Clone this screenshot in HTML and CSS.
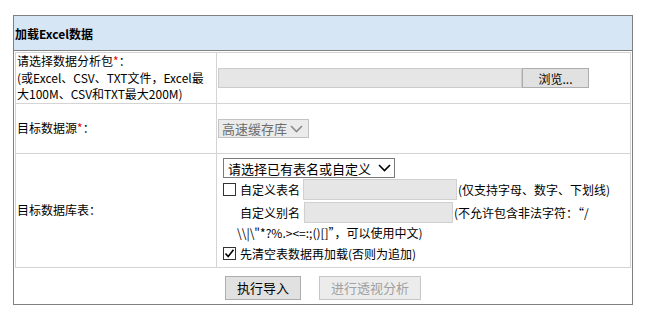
FILE: index.html
```html
<!DOCTYPE html>
<html lang="zh-CN">
  <head>
    <meta charset="UTF-8" />
    <meta name="viewport" content="width=device-width, initial-scale=1.0" />
    <title>加载Excel数据</title>
    <link rel="stylesheet" href="styles.css">
  </head>
  <body>
    <div class="panel">
      <div class="panel-head">加载Excel数据</div>
      <table class="form-table">
        <tr class="row-file">
          <td class="label">请选择数据分析包<span class="req">*</span>：<br>(或Excel、CSV、TXT文件，Excel最<br>大100M、CSV和TXT最大200M)</td>
          <td class="field">
            <div class="file-line">
              <span class="file-box"></span>
              <span class="btn btn-browse">浏览...</span>
            </div>
          </td>
        </tr>
        <tr class="row-source">
          <td class="label">目标数据源<span class="req">*</span>：</td>
          <td class="field">
            <div class="select select-disabled">
              <span class="select-text">高速缓存库</span>
              <svg class="chev" width="13" height="8" viewBox="0 0 13 8"><polyline points="1,1 6.5,6.5 12,1" fill="none" stroke="#8a8a8a" stroke-width="1.6"/></svg>
            </div>
          </td>
        </tr>
        <tr class="row-table">
          <td class="label">目标数据库表：</td>
          <td class="field field-table">
            <div class="select select-table">
              <span class="select-text">请选择已有表名或自定义</span>
              <svg class="chev" width="13" height="8" viewBox="0 0 13 8"><polyline points="1,1 6.5,6.5 12,1" fill="none" stroke="#000" stroke-width="1.6"/></svg>
            </div>
            <div class="opt-line opt-name">
              <span class="check"></span>
              <span class="opt-label">自定义表名</span>
              <span class="text-box box-name"></span>
              <span class="hint">(仅支持字母、数字、下划线)</span>
            </div>
            <div class="alias-block">
              <div class="opt-line opt-alias">
                <span class="opt-label">自定义别名</span>
                <span class="text-box box-alias"></span>
                <span class="hint">(不允许包含非法字符：“/</span>
              </div>
              <div class="hint-wrap">\\|\"*?%.&gt;&lt;=:;()[]”，可以使用中文)</div>
            </div>
            <div class="opt-line opt-clear">
              <span class="check checked">
                <svg width="11" height="11" viewBox="0 0 11 11"><polyline points="1.5,5.5 4.2,8.5 9.5,1.8" fill="none" stroke="#000" stroke-width="1.6"/></svg>
              </span>
              <span class="opt-label">先清空表数据再加载(否则为追加)</span>
            </div>
          </td>
        </tr>
      </table>
      <div class="actions">
        <button class="btn btn-run">执行导入</button>
        <button class="btn btn-pivot" disabled>进行透视分析</button>
      </div>
    </div>
  </body>
</html>
```

FILE: styles.css
```css
body {
  margin: 0;
  background: #fff;
  color: #000;
  font-family: "Noto Sans CJK SC", "Liberation Sans", sans-serif;
  font-size: 12px;
}
.panel {
  margin: 15px 0 0 13px;
  width: 618px;
  border: 1px solid #808080;
}
.panel-head {
  height: 34px;
  line-height: 36px;
  padding-left: 1px;
  background-color: #d6e6f5;
  border-bottom: 1px solid #808080;
  font-weight: bold;
}
.form-table {
  margin: 1px 1px 0 1px;
  width: 616px;
  border-collapse: collapse;
}
.form-table td {
  border: 1px solid #d4d4d4;
  padding: 0;
  vertical-align: middle;
}
.label {
  width: 199px;
  padding-left: 1px !important;
  line-height: 16.5px;
}
.req {
  color: #e00;
}
.row-file td {
  height: 50px;
}
.row-source td {
  height: 49px;
}
.row-table td {
  height: 109px;
}
.file-line {
  display: flex;
  align-items: center;
  margin-left: 1px;
}
.file-box {
  width: 302px;
  height: 18px;
  border: 1px solid #cbcbcb;
  background-color: #e6e6e6;
}
.btn {
  font-family: "Noto Sans CJK SC", "Liberation Sans", sans-serif;
  font-size: 13px;
  font-weight: normal;
  color: #000;
  border: 1px solid #adadad;
  background-color: #e1e1e1;
}
.btn-browse {
  display: flex;
  align-items: center;
  justify-content: center;
  width: 65px;
  height: 18px;
  font-size: 12px;
}
.select {
  display: flex;
  align-items: center;
  justify-content: space-between;
  box-sizing: border-box;
  font-size: 13px;
}
.select-disabled {
  margin-left: 1px;
  width: 91px;
  height: 19px;
  padding: 0 5px 0 3px;
  border: 1px solid #c3c3c3;
  background-color: #ebebeb;
  color: #6d6d6d;
}
.field-table {
  vertical-align: top !important;
  padding: 4px 0 0 6px !important;
}
.select-table {
  width: 172px;
  height: 20px;
  padding: 0 3px 0 4px;
  border: 1px solid #7a7a7a;
  background-color: #fff;
}
.opt-line {
  display: flex;
  align-items: center;
}
.opt-name {
  margin-top: 1px;
}
.alias-block {
  margin-top: 2px;
  padding-left: 14px;
}
.opt-alias {
  padding-left: 3px;
}
.check {
  display: flex;
  align-items: center;
  justify-content: center;
  box-sizing: border-box;
  width: 13px;
  height: 13px;
  margin-right: 4px;
  border: 1px solid #333;
  background-color: #fff;
}
.opt-label {
  white-space: nowrap;
}
.text-box {
  box-sizing: border-box;
  height: 21px;
  border: 1px solid #d0d0d0;
  background-color: #e6e6e6;
}
.box-name {
  width: 154px;
  margin: 0 1px 0 3px;
}
.box-alias {
  width: 149px;
  margin: 0 1px 0 4px;
}
.hint {
  white-space: nowrap;
}
.hint-wrap {
  height: 20px;
  line-height: 20px;
  white-space: nowrap;
}
.opt-clear {
  margin-top: 2px;
}
.actions {
  height: 36px;
  padding: 8px 0 0 211px;
  box-sizing: border-box;
  display: flex;
  gap: 18px;
}
.actions .btn {
  height: 24px;
  padding: 0 11px;
  line-height: 20px;
}
.btn-pivot {
  color: #a0a0a0;
  border-color: #c6c6c6;
  background-color: #ececec;
}
```
